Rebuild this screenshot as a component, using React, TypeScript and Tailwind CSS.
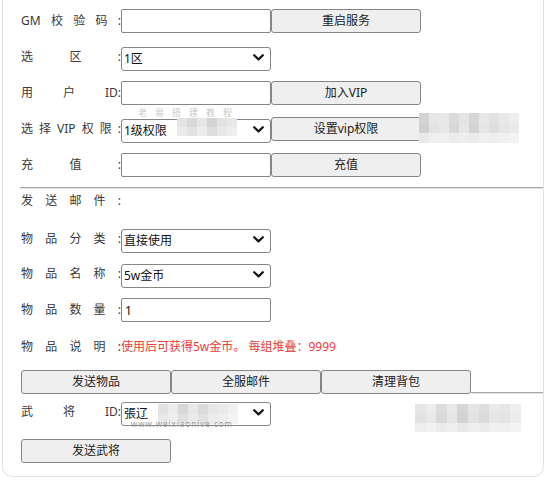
import React from "react";

const font = { fontFamily: '"Noto Sans", "Noto Sans CJK SC", sans-serif' };

function Label({ tokens }: { tokens: string[] }) {
  return (
    <div className="flex w-[100px] shrink-0 justify-between text-[12px] leading-none text-[#3a3a3a]">
      {tokens.map((t, i) => (
        <span key={i}>{t}</span>
      ))}
    </div>
  );
}

function TextInput({ value = "" }: { value?: string }) {
  return (
    <input
      readOnly
      value={value}
      className="h-6 w-[150px] shrink-0 rounded-[2px] border border-[#858585] bg-white px-[3px] text-[12px] text-[#111] outline-none"
    />
  );
}

function Btn({ children }: { children: React.ReactNode }) {
  return (
    <button className="h-6 w-[150px] shrink-0 rounded-[3px] border border-[#858585] bg-[#efefef] text-[12px] text-[#222]">
      {children}
    </button>
  );
}

function Select({ value }: { value: string }) {
  return (
    <div className="relative h-6 w-[150px] shrink-0">
      <select
        defaultValue={value}
        className="h-full w-full appearance-none rounded-[3px] border border-[#858585] bg-white pl-[2px] text-[12px] text-[#111] outline-none"
      >
        <option value={value}>{value}</option>
      </select>
      <svg
        className="pointer-events-none absolute right-[7px] top-[9px]"
        width="11"
        height="7"
        viewBox="0 0 11 7"
      >
        <polyline
          points="1.2,1.2 5.5,5.4 9.8,1.2"
          fill="none"
          stroke="#111"
          strokeWidth="2.2"
          strokeLinecap="round"
          strokeLinejoin="round"
        />
      </svg>
    </div>
  );
}

function Mosaic({
  left,
  top,
  cell,
  rows,
}: {
  left: number;
  top: number;
  cell: [number, number];
  rows: string[][];
}) {
  return (
    <div className="pointer-events-none absolute flex flex-col" style={{ left, top }}>
      {rows.map((r, i) => (
        <div key={i} className="flex">
          {r.map((c, j) => (
            <div key={j} style={{ width: cell[0], height: cell[1], background: c }} />
          ))}
        </div>
      ))}
    </div>
  );
}

const mosA = [
  ["#d4d4d4", "#e6e6e6", "#e9e9e9", "#dadada", "#e4e4e4", "#d6d6d6", "#e8e8e8", "#e2e2e2", "#e8e8e8", "#ededed"],
  ["#d0d0d0", "#e4e4e4", "#e8e8e8", "#d8d8d8", "#e6e6e6", "#d4d4d4", "#e6e6e6", "#dedede", "#e6e6e6", "#eaeaea"],
  ["#e9e9e9", "#efefef", "#f0f0f0", "#ececec", "#eeeeee", "#ebebeb", "#efefef", "#eeeeee", "#f0f0f0", "#f3f3f3"],
];
const mosB = [
  ["#e6e6e6", "#ececec", "#dcdcdc", "#e8e8e8", "#d6d6d6", "#e4e4e4", "#dedede", "#eaeaea", "#e6e6e6", "#eeeeee"],
  ["#e2e2e2", "#e8e8e8", "#d8d8d8", "#e6e6e6", "#d2d2d2", "#e2e2e2", "#dadada", "#e6e6e6", "#e4e4e4", "#ececec"],
  ["#eeeeee", "#f1f1f1", "#ebebeb", "#efefef", "#e9e9e9", "#eeeeee", "#ececec", "#f0f0f0", "#efefef", "#f3f3f3"],
];
const mosC = [
  ["#e4e4e4", "#d8d8d8", "#e6e6e6", "#d4d4d4", "#e2e2e2", "#e8e8e8"],
  ["#eaeaea", "#e2e2e2", "#ececec", "#dedede", "#e8e8e8", "#eeeeee"],
];
const mosD = [
  ["#e2e2e2", "#ececec", "#d8d8d8", "#e8e8e8", "#dadada", "#e6e6e6", "#eaeaea", "#f0f0f0"],
  ["#e8e8e8", "#eeeeee", "#e0e0e0", "#ebebeb", "#e2e2e2", "#ececec", "#eeeeee", "#f3f3f3"],
];

export default function App() {
  return (
    <div className="relative h-[481px] w-[555px] overflow-hidden bg-white" style={font}>
      <div className="ml-[2px] h-[477px] w-[542px] rounded-b-[10px] border-x border-b border-[#e2e2e2] pl-[18px] pt-[9px]">
        <div className="flex flex-col gap-3">
          <div className="flex h-6 items-center">
            <Label tokens={["GM", "校", "验", "码", ":"]} />
            <TextInput />
            <Btn>重启服务</Btn>
          </div>
          <div className="flex h-6 items-center">
            <Label tokens={["选", "区", ":"]} />
            <Select value="1区" />
          </div>
          <div className="flex h-6 items-center">
            <Label tokens={["用", "户", "ID:"]} />
            <TextInput />
            <Btn>加入VIP</Btn>
          </div>
          <div className="flex h-6 items-center">
            <Label tokens={["选", "择", "VIP", "权", "限", ":"]} />
            <Select value="1级权限" />
            <Btn>设置vip权限</Btn>
          </div>
          <div className="flex h-6 items-center">
            <Label tokens={["充", "值", ":"]} />
            <TextInput />
            <Btn>充值</Btn>
          </div>
        </div>

        <div className="-ml-px mt-[10px] border-t border-b border-t-[#a8a8a8] border-b-[#e4e4e4]" />

        <div className="flex h-6 items-center">
          <Label tokens={["发", "送", "邮", "件", ":"]} />
        </div>
        <div className="mt-[14px] flex h-6 items-center">
          <Label tokens={["物", "品", "分", "类", ":"]} />
          <Select value="直接使用" />
        </div>
        <div className="mt-[11px] flex h-6 items-center">
          <Label tokens={["物", "品", "名", "称", ":"]} />
          <Select value="5w金币" />
        </div>
        <div className="mt-[12px] flex h-6 items-center">
          <Label tokens={["物", "品", "数", "量", ":"]} />
          <TextInput value="1" />
        </div>
        <div className="mt-[13px] flex h-6 items-center">
          <Label tokens={["物", "品", "说", "明", ":"]} />
          <span className="text-[12px] leading-none text-[#ee3b3b]">
            使用后可获得5w金币。 每组堆叠：9999
          </span>
        </div>

        <div className="mt-[11px] flex h-6 items-end">
          <Btn>发送物品</Btn>
          <Btn>全服邮件</Btn>
          <Btn>清理背包</Btn>
          <div className="flex-1 border-t border-b border-t-[#a8a8a8] border-b-[#e4e4e4]" />
        </div>

        <div className="mt-[6px] flex h-6 items-center">
          <Label tokens={["武", "将", "ID:"]} />
          <Select value="張辽" />
        </div>

        <div className="mt-[15px] flex">
          <Btn>发送武将</Btn>
        </div>
      </div>

      {/* watermark / mosaic overlays from the screenshot */}
      <div className="pointer-events-none absolute left-[138px] top-[108px] text-[9px] leading-[9px] tracking-[8px] text-[#c8c8c8]">
        老易搭建教程
      </div>
      <Mosaic left={177} top={118} cell={[10, 9]} rows={mosC} />
      <Mosaic left={419} top={113} cell={[10, 10]} rows={mosA} />
      <Mosaic left={158} top={404} cell={[10, 10]} rows={mosD} />
      <Mosaic left={415} top={404} cell={[10.6, 9.4]} rows={mosB} />
      <div className="pointer-events-none absolute left-[131px] top-[418px] text-[8px] tracking-[1px] text-[#9a9a9a]">
        www.weixiaonive.com
      </div>
    </div>
  );
}
